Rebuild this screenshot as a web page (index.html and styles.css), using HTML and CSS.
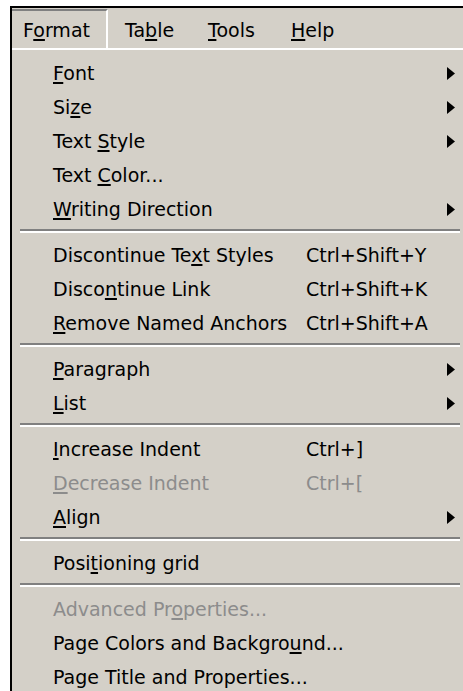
FILE: index.html
```html
<!DOCTYPE html>
<html lang="en">
<head>
<meta charset="utf-8">
<title>Format menu</title>
<link rel="stylesheet" href="styles.css">
</head>
<body>
<div class="window">
  <div class="menubar">
    <span class="mb-item pressed">F<u>o</u>rmat</span>
    <span class="mb-item">Ta<u>b</u>le</span>
    <span class="mb-item"><u>T</u>ools</span>
    <span class="mb-item"><u>H</u>elp</span>
  </div>
  <div class="menu">
    <div class="item"><span class="label"><u>F</u>ont</span><span class="key"></span><span class="arrow"><svg width="8" height="13" viewBox="0 0 8 13"><polygon points="0,0 8,6.5 0,13"/></svg></span></div>
    <div class="item"><span class="label">Si<u>z</u>e</span><span class="key"></span><span class="arrow"><svg width="8" height="13" viewBox="0 0 8 13"><polygon points="0,0 8,6.5 0,13"/></svg></span></div>
    <div class="item"><span class="label">Text <u>S</u>tyle</span><span class="key"></span><span class="arrow"><svg width="8" height="13" viewBox="0 0 8 13"><polygon points="0,0 8,6.5 0,13"/></svg></span></div>
    <div class="item"><span class="label">Text <u>C</u>olor...</span><span class="key"></span><span class="arrow"></span></div>
    <div class="item"><span class="label"><u>W</u>riting Direction</span><span class="key"></span><span class="arrow"><svg width="8" height="13" viewBox="0 0 8 13"><polygon points="0,0 8,6.5 0,13"/></svg></span></div>
    <div class="sep"></div>
    <div class="item"><span class="label">Discontinue Te<u>x</u>t Styles</span><span class="key">Ctrl+Shift+Y</span><span class="arrow"></span></div>
    <div class="item"><span class="label">Disco<u>n</u>tinue Link</span><span class="key">Ctrl+Shift+K</span><span class="arrow"></span></div>
    <div class="item"><span class="label"><u>R</u>emove Named Anchors</span><span class="key">Ctrl+Shift+A</span><span class="arrow"></span></div>
    <div class="sep"></div>
    <div class="item"><span class="label"><u>P</u>aragraph</span><span class="key"></span><span class="arrow"><svg width="8" height="13" viewBox="0 0 8 13"><polygon points="0,0 8,6.5 0,13"/></svg></span></div>
    <div class="item"><span class="label"><u>L</u>ist</span><span class="key"></span><span class="arrow"><svg width="8" height="13" viewBox="0 0 8 13"><polygon points="0,0 8,6.5 0,13"/></svg></span></div>
    <div class="sep"></div>
    <div class="item"><span class="label"><u>I</u>ncrease Indent</span><span class="key">Ctrl+]</span><span class="arrow"></span></div>
    <div class="item off"><span class="label"><u>D</u>ecrease Indent</span><span class="key">Ctrl+[</span><span class="arrow"></span></div>
    <div class="item"><span class="label"><u>A</u>lign</span><span class="key"></span><span class="arrow"><svg width="8" height="13" viewBox="0 0 8 13"><polygon points="0,0 8,6.5 0,13"/></svg></span></div>
    <div class="sep"></div>
    <div class="item"><span class="label">Posi<u>t</u>ioning grid</span><span class="key"></span><span class="arrow"></span></div>
    <div class="sep"></div>
    <div class="item off"><span class="label">Advanced Pr<u>o</u>perties...</span><span class="key"></span><span class="arrow"></span></div>
    <div class="item"><span class="label">Page Colors and Backgro<u>u</u>nd...</span><span class="key"></span><span class="arrow"></span></div>
    <div class="item"><span class="label">Page Title and Properties...</span><span class="key"></span><span class="arrow"></span></div>
  </div>
</div>
</body>
</html>
```

FILE: styles.css
```css
html,
body {
  margin: 0;
  overflow: hidden;
  background: #ffffff;
}

body {
  font-family: "DejaVu Sans", Verdana, sans-serif;
  font-size: 19px;
  color: #000000;
}

u {
  text-decoration: underline;
  text-decoration-thickness: 2px;
  text-underline-offset: 2px;
}

/* window frame: only the top and left edges are in view */
.window {
  margin: 6px 0 0 10px;
  border-top: 2px solid #000000;
  border-left: 2px solid #000000;
  background: #d4d0c8;
}

/* menu bar */
.menubar {
  display: flex;
  height: 40px;
  border-bottom: 2px solid #ffffff;
}

.mb-item {
  box-sizing: border-box;
  width: 83px;
  padding: 4px 0 0 17px;
  line-height: 36px;
  white-space: nowrap;
}

.mb-item.pressed {
  width: 96px;
  margin-top: 1px;
  padding: 1px 0 0 11px;
  border-top: 2px solid #808080;
  border-right: 2px solid #ffffff;
}

/* drop-down */
.menu {
  padding-top: 6px;
}

.item {
  display: grid;
  grid-template-columns: 253px 1fr 8px;
  align-items: center;
  height: 34px;
  line-height: 34px;
  padding: 0 8px 0 41px;
  white-space: nowrap;
}

.item.off {
  color: #8c8c8c;
}

.arrow {
  display: flex;
  align-items: center;
}

.arrow svg {
  display: block;
  fill: #000000;
}

.sep {
  box-sizing: border-box;
  height: 12px;
  padding-top: 3px;
  margin: 0 3px 0 8px;
}

.sep::before {
  content: "";
  display: block;
  height: 2px;
  background: #808080;
  border-bottom: 2px solid #ffffff;
}
```
